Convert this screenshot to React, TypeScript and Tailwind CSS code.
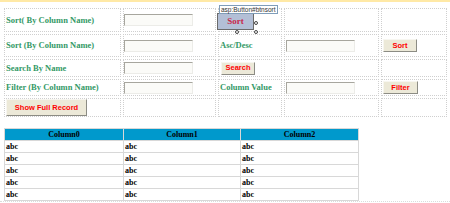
import React from 'react'

// design view of the search / sort / filter form
const label = 'font-["Liberation_Serif",serif] text-[8.5px] font-bold text-[#339966] whitespace-nowrap'
const cell = 'border border-dotted border-[#cfcfcf] flex items-center'
const input = 'h-[12px] w-[69px] bg-[#fbfbf8] border border-[#a7a69e] border-b-[#ecece8] border-r-[#ecece8]'
const btn =
  'flex items-center justify-center bg-[#ece9d8] border border-[#f7f6f0] border-b-[#8c8c84] border-r-[#8c8c84] font-["Liberation_Sans",sans-serif] text-[7.5px] font-bold text-[#ff0000]'

const rows = ['abc', 'abc', 'abc', 'abc', 'abc']

export default function App() {
  return (
    <div className="relative h-[203px] w-[450px] overflow-hidden bg-white">
      <div className="h-[2px] bg-[#ffe9a6]" />
      <div className="pl-[4px] pt-[6px]">
        <div className="grid grid-cols-[117px_93px_64px_95px_66px] grid-rows-[24px_23px_18px_17px_19px] gap-[2px]">
          {/* row 1 */}
          <div className={`${cell} pl-[1px]`}>
            <span className={label}>Sort( By Column Name)</span>
          </div>
          <div className={cell}>
            <div className={input} />
          </div>
          <div className={`${cell} relative`}>
            <div className="ml-[-2px] mt-[3px] flex h-[17px] w-[37px] items-center justify-center border border-[#6b6b6b] bg-[#b3bfd6] font-['Liberation_Serif',serif] text-[9px] font-bold text-[#c8284a]">
              Sort
            </div>
            <div className="absolute left-[0px] top-[-4px] whitespace-nowrap border border-[#7f9db9] bg-white px-[1px] font-['Liberation_Sans',sans-serif] text-[6.5px] leading-[7px] text-[#333]">
              asp:Button#btnsort
            </div>
            <span className="absolute left-[35px] top-[12px] h-[4px] w-[4px] rounded-full border border-[#444] bg-white" />
            <span className="absolute left-[16px] top-[21px] h-[4px] w-[4px] rounded-full border border-[#444] bg-white" />
            <span className="absolute left-[35px] top-[21px] h-[4px] w-[4px] rounded-full border border-[#444] bg-white" />
          </div>
          <div className={cell} />
          <div className={cell} />

          {/* row 2 */}
          <div className={`${cell} pl-[1px]`}>
            <span className={label}>Sort (By Column Name)</span>
          </div>
          <div className={cell}>
            <div className={input} />
          </div>
          <div className={`${cell} pl-[1px]`}>
            <span className={label}>Asc/Desc</span>
          </div>
          <div className={`${cell} pl-[1px]`}>
            <div className={input} />
          </div>
          <div className={`${cell} pl-[1px]`}>
            <div className={`${btn} h-[13px] w-[34px]`}>Sort</div>
          </div>

          {/* row 3 */}
          <div className={`${cell} pl-[1px]`}>
            <span className={label}>Search By Name</span>
          </div>
          <div className={cell}>
            <div className={input} />
          </div>
          <div className={`${cell} pl-[2px]`}>
            <div className={`${btn} h-[13px] w-[34px]`}>Search</div>
          </div>
          <div className={cell} />
          <div className={cell} />

          {/* row 4 */}
          <div className={`${cell} pl-[1px]`}>
            <span className={label}>Filter (By Column Name)</span>
          </div>
          <div className={cell}>
            <div className={input} />
          </div>
          <div className={`${cell} pl-[1px]`}>
            <span className={label}>Column Value</span>
          </div>
          <div className={`${cell} pl-[1px]`}>
            <div className={input} />
          </div>
          <div className={`${cell} pl-[1px]`}>
            <div className={`${btn} h-[13px] w-[35px]`}>Filter</div>
          </div>

          {/* row 5 */}
          <div className={`${cell} pl-[1px]`}>
            <div className={`${btn} h-[17px] w-[81px]`}>Show Full Record</div>
          </div>
          <div className={cell} />
          <div className={cell} />
          <div className={cell} />
          <div className={cell} />
        </div>
      </div>

      <div className="mt-[11px] border-b border-dotted border-[#dcdcdc] pl-[4px]">
        <table className="w-[354px] table-fixed border-collapse font-['Liberation_Serif',serif] text-[8px] font-bold text-black">
          <colgroup>
            <col className="w-[119px]" />
            <col className="w-[117px]" />
            <col className="w-[118px]" />
          </colgroup>
          <thead>
            <tr className="h-[12px] bg-[#0099cc]">
              <th className="border border-[#d8d8d8] p-0 text-center leading-[10px]">Column0</th>
              <th className="border border-[#d8d8d8] p-0 text-center leading-[10px]">Column1</th>
              <th className="border border-[#d8d8d8] p-0 text-center leading-[10px]">Column2</th>
            </tr>
          </thead>
          <tbody>
            {rows.map((r, i) => (
              <tr key={i} className="h-[12px]">
                <td className="border border-[#d8d8d8] p-0 pl-[1px] leading-[10px]">{r}</td>
                <td className="border border-[#d8d8d8] p-0 pl-[1px] leading-[10px]">{r}</td>
                <td className="border border-[#d8d8d8] p-0 pl-[1px] leading-[10px]">{r}</td>
              </tr>
            ))}
          </tbody>
        </table>
      </div>
    </div>
  )
}
